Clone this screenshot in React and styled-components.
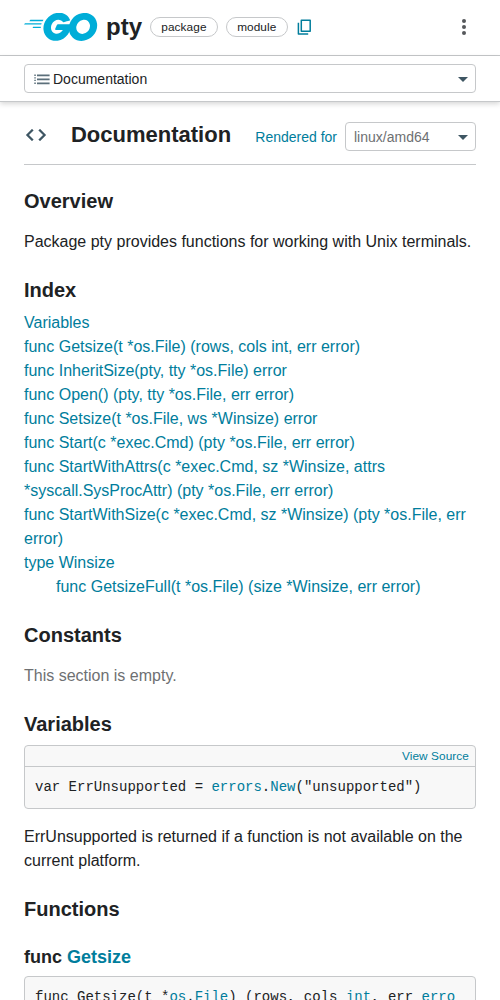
import React from 'react';
import styled, { createGlobalStyle } from 'styled-components';

const c = { text: '#202224', link: '#007d9c', border: '#c6c8ca', grey: '#6e7072', icon: '#3e5663', code: '#f8f8f8' };

const GlobalStyle = createGlobalStyle`
  * { box-sizing: border-box; }
  html, body { margin: 0; height: 1000px; overflow: hidden; background: #fff; }
  body { font: 16px/24px "Liberation Sans", Arial, sans-serif; color: ${c.text}; }
  a { color: ${c.link}; text-decoration: none; }
  h1, h2, h3, p, ul, pre { margin: 0; padding: 0; font-size: inherit; }
`;
const Page = styled.div`
  height: 1000px;
  overflow: hidden;
`;
const TopBar = styled.header`
  display: flex;
  align-items: center;
  height: 56px;
  padding: 0 24px 2px;
  border-bottom: 1px solid ${c.border};
`;
const GoLogo = styled.svg`
  width: 73.5px;
  height: 28px;
  flex: none;
  fill: #00add8;
`;
const PackageName = styled.h1`
  margin-left: 8.5px;
  font-size: 24px;
  line-height: 28px;
  font-weight: bold;
`;
const Chip = styled.span`
  height: 20px;
  margin-left: 8px;
  padding: 0 10.3px;
  border: 1px solid ${c.border};
  border-radius: 10px;
  font-size: 11.8px;
  letter-spacing: 0.09px;
  line-height: 18px;
`;
const CopyIcon = styled.svg`
  width: 16px;
  height: 16px;
  margin-left: 9px;
  fill: none;
  stroke: ${c.link};
  stroke-width: 1.5;
  stroke-linejoin: round;
`;
const MoreIcon = styled.svg`
  width: 24px;
  height: 24px;
  margin-left: auto;
  fill: #55585b;
`;
const NavBar = styled.nav`
  height: 46px;
  padding: 8px 24px;
  border-bottom: 1px solid ${c.border};
  box-shadow: 0 2px 5px rgba(0, 0, 0, 0.16);
`;
const Select = styled.div`
  display: flex;
  align-items: center;
  width: ${(p) => p.$width || '100%'};
  height: 29px;
  padding: 0 7px 0 ${(p) => p.$indent || '8px'};
  border: 1px solid ${c.border};
  border-radius: 4px;
  color: ${(p) => p.$color || c.text};
  font-size: 14px;
  line-height: 20px;
`;
const ListIcon = styled.svg`
  width: 16px;
  height: 12px;
  margin: 1px 3px 0 0;
  fill: ${c.icon};
`;
const Caret = styled.span`
  margin: 2px 0 0 auto;
  border: 5px solid transparent;
  border-top-color: ${c.icon};
  border-bottom: 0;
`;
const Main = styled.main`
  padding: 0 24px;
`;
const TitleRow = styled.div`
  display: flex;
  align-items: center;
  height: 63px;
  padding-top: 7px;
  border-bottom: 1px solid ${c.border};
`;
const CodeIcon = styled.svg`
  width: 24px;
  height: 24px;
  margin: -4px 22.7px 0 0.3px;
  fill: ${c.icon};
  stroke: ${c.icon};
  stroke-width: 0.3;
`;
const Title = styled.h2`
  margin-top: -4px;
  font-size: 22px;
`;
const RenderedFor = styled.a`
  margin: 0 8px 0 auto;
  padding-top: 1px;
  font-size: 14px;
`;
const Heading = styled.h2`
  margin-top: 24px;
  margin-bottom: ${(p) => p.$bottom || '16px'};
  font-size: 20px;
  line-height: 25px;
`;
const SubHeading = styled.h3`
  margin: -1px 0 6px;
  font-size: 18px;
  line-height: 25px;
`;
const Text = styled.p`
  margin-top: ${(p) => p.$top || 0};
  color: ${(p) => p.$color || c.text};
`;
const IndexList = styled.ul`
  list-style: none;
  ul { padding-left: 32px; list-style: none; }
`;
const Declaration = styled.div`
  border: 1px solid ${c.border};
  border-radius: 4px;
  background: ${c.code};
  overflow: hidden;
`;
const SourceBar = styled.div`
  height: 21px;
  padding-right: 6px;
  border-bottom: 1px solid ${c.border};
  text-align: right;
  font-size: 11.8px;
  letter-spacing: 0.09px;
  line-height: 20px;
`;
const Code = styled.pre`
  padding: 10px;
  font: 14px/21px "Liberation Mono", monospace;
`;
const CodeScroll = styled.div`
  overflow: hidden;
  margin-right: 10px;
`;

const index = [
  'Variables',
  'func Getsize(t *os.File) (rows, cols int, err error)',
  'func InheritSize(pty, tty *os.File) error',
  'func Open() (pty, tty *os.File, err error)',
  'func Setsize(t *os.File, ws *Winsize) error',
  'func Start(c *exec.Cmd) (pty *os.File, err error)',
  'func StartWithAttrs(c *exec.Cmd, sz *Winsize, attrs *syscall.SysProcAttr) (pty *os.File, err error)',
  'func StartWithSize(c *exec.Cmd, sz *Winsize) (pty *os.File, err error)',
];

export default function App() {
  return (
    <Page>
      <GlobalStyle />
      <TopBar>
        <GoLogo viewBox="24.7 78.7 206.3 76.2" preserveAspectRatio="none">
          <path d="M40.2,101.1c-0.4,0-0.5-0.2-0.3-0.5l2.1-2.7c0.2-0.3,0.7-0.5,1.1-0.5l35.7,0c0.4,0,0.5,0.3,0.3,0.6l-1.7,2.6c-0.2,0.3-0.7,0.6-1,0.6L40.2,101.1z" />
          <path d="M25.1,110.3c-0.4,0-0.5-0.2-0.3-0.5l2.1-2.7c0.2-0.3,0.7-0.5,1.1-0.5l45.6,0c0.4,0,0.6,0.3,0.5,0.6l-0.8,2.4c-0.1,0.4-0.5,0.6-0.9,0.6L25.1,110.3z" />
          <path d="M49.3,119.5c-0.4,0-0.5-0.3-0.3-0.6l1.4-2.5c0.2-0.3,0.6-0.6,1-0.6l20,0c0.4,0,0.6,0.3,0.6,0.7l-0.2,2.4c0,0.4-0.4,0.7-0.7,0.7L49.3,119.5z" />
          <path d="M153.1,99.3c-6.3,1.6-10.6,2.8-16.8,4.4c-1.5,0.4-1.6,0.5-2.9-1c-1.5-1.7-2.6-2.8-4.7-3.8c-6.3-3.1-12.4-2.2-18.1,1.5c-6.8,4.4-10.3,10.9-10.2,19c0.1,8,5.6,14.6,13.5,15.7c6.8,0.9,12.5-1.5,17-6.6c0.9-1.1,1.7-2.3,2.7-3.7c-3.6,0-8.1,0-19.3,0c-2.1,0-2.6-1.3-1.9-3c1.3-3.1,3.7-8.3,5.1-10.9c0.3-0.6,1-1.6,2.5-1.6c5.1,0,23.9,0,36.4,0c-0.2,2.7-0.2,5.4-0.6,8.1c-1.1,7.2-3.8,13.8-8.2,19.6c-7.2,9.5-16.6,15.4-28.5,17c-9.8,1.3-18.9-0.6-26.9-6.6c-7.4-5.6-11.6-13-12.7-22.2c-1.3-10.9,1.9-20.7,8.5-29.3c7.1-9.3,16.5-15.2,28-17.3c9.4-1.7,18.4-0.6,26.5,4.9c5.3,3.5,9.1,8.3,11.6,14.1C154.7,98.5,154.3,99,153.1,99.3z" />
          <path d="M186.2,154.6c-9.1-0.2-17.4-2.8-24.4-8.8c-5.9-5.1-9.6-11.6-10.8-19.3c-1.8-11.3,1.3-21.3,8.1-30.2c7.3-9.6,16.1-14.6,28-16.7c10.2-1.8,19.8-0.8,28.5,5.1c7.9,5.4,12.8,12.7,14.1,22.3c1.7,13.5-2.2,24.5-11.5,33.9c-6.6,6.7-14.7,10.9-24,12.8C191.5,154.2,188.8,154.3,186.2,154.6z M210,114.2c-0.1-1.3-0.1-2.3-0.3-3.3c-1.8-9.9-10.9-15.5-20.4-13.3c-9.3,2.1-15.3,8-17.5,17.4c-1.8,7.8,2,15.7,9.2,18.9c5.5,2.4,11,2.1,16.3-0.6C205.2,129.2,209.5,122.8,210,114.2z" />
        </GoLogo>
        <PackageName>pty</PackageName>
        <Chip>package</Chip>
        <Chip>module</Chip>
        <CopyIcon viewBox="0 0 16 16">
          <path d="M4.3 1.3h8.9v10.9h-8.9zM1.4 3.8v11.2h9.8" />
        </CopyIcon>
        <MoreIcon viewBox="0 0 24 24">
          <circle cx="12" cy="6" r="2" />
          <circle cx="12" cy="12" r="2" />
          <circle cx="12" cy="18" r="2" />
        </MoreIcon>
      </TopBar>
      <NavBar>
        <Select $indent="9px">
          <ListIcon viewBox="0 0 16 12">
            <path opacity="0.85" d="M0.3 1.5h1.5v1.5H0.3zM0.3 4.2h1.5v1.3H0.3zM0.3 6.8h1.5v1.3H0.3zM0.3 9.5h1.5v1.5H0.3zM3 1.6h12.6v1.7H3zM3 5.6h12.6v1.7H3zM3 9.6h12.6v1.7H3z" />
          </ListIcon>
          Documentation
          <Caret />
        </Select>
      </NavBar>
      <Main>
        <TitleRow>
          <CodeIcon viewBox="0 0 24 24">
            <path d="M9.4 16.6 4.8 12l4.6-4.6L8 6l-6 6 6 6 1.4-1.4zm5.2 0 4.6-4.6-4.6-4.6L16 6l6 6-6 6-1.4-1.4z" />
          </CodeIcon>
          <Title>Documentation</Title>
          <RenderedFor href="#">Rendered for</RenderedFor>
          <Select $width="131px" $color={c.grey}>
            linux/amd64
            <Caret />
          </Select>
        </TitleRow>
        <Heading>Overview</Heading>
        <Text>Package pty provides functions for working with Unix terminals.</Text>
        <Heading $bottom="8px">Index</Heading>
        <IndexList>
          {index.map((item) => (
            <li key={item}><a href="#">{item}</a></li>
          ))}
          <li>
            <a href="#">type Winsize</a>
            <ul>
              <li><a href="#">func GetsizeFull(t *os.File) (size *Winsize, err error)</a></li>
            </ul>
          </li>
        </IndexList>
        <Heading>Constants</Heading>
        <Text $color={c.grey}>This section is empty.</Text>
        <Heading $bottom="8px">Variables</Heading>
        <Declaration>
          <SourceBar><a href="#">View Source</a></SourceBar>
          <Code>var ErrUnsupported = <a href="#">errors</a>.<a href="#">New</a>("unsupported")</Code>
        </Declaration>
        <Text $top="16px">
          ErrUnsupported is returned if a function is not available on the current platform.
        </Text>
        <Heading $bottom="24px">Functions</Heading>
        <SubHeading>func <a href="#">Getsize</a></SubHeading>
        <Declaration>
          <CodeScroll>
            <Code>func Getsize(t *<a href="#">os</a>.<a href="#">File</a>) (rows, cols <a href="#">int</a>, err <a href="#">erro</a></Code>
          </CodeScroll>
        </Declaration>
      </Main>
    </Page>
  );
}
